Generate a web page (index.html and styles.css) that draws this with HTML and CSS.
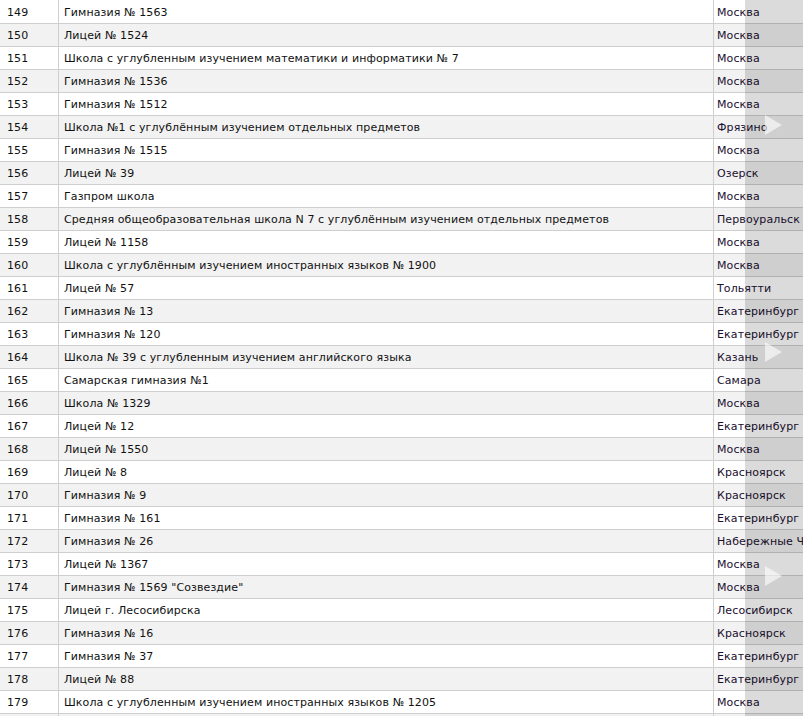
FILE: index.html
```html
<!DOCTYPE html>
<html lang="ru">
<head>
<meta charset="utf-8">
<link rel="stylesheet" href="styles.css">
</head>
<body>
<div class="wrap">
<table class="rating">
<colgroup><col class="c-num"><col class="c-name"><col class="c-city"></colgroup>
<tbody>
<tr><td>149</td><td>Гимназия № 1563</td><td>Москва</td></tr>
<tr><td>150</td><td>Лицей № 1524</td><td>Москва</td></tr>
<tr><td>151</td><td>Школа с углубленным изучением математики и информатики № 7</td><td>Москва</td></tr>
<tr><td>152</td><td>Гимназия № 1536</td><td>Москва</td></tr>
<tr><td>153</td><td>Гимназия № 1512</td><td>Москва</td></tr>
<tr><td>154</td><td>Школа №1 с углублённым изучением отдельных предметов</td><td>Фрязино</td></tr>
<tr><td>155</td><td>Гимназия № 1515</td><td>Москва</td></tr>
<tr><td>156</td><td>Лицей № 39</td><td>Озерск</td></tr>
<tr><td>157</td><td>Газпром школа</td><td>Москва</td></tr>
<tr><td>158</td><td>Средняя общеобразовательная школа N 7 с углублённым изучением отдельных предметов</td><td>Первоуральск</td></tr>
<tr><td>159</td><td>Лицей № 1158</td><td>Москва</td></tr>
<tr><td>160</td><td>Школа с углублённым изучением иностранных языков № 1900</td><td>Москва</td></tr>
<tr><td>161</td><td>Лицей № 57</td><td>Тольятти</td></tr>
<tr><td>162</td><td>Гимназия № 13</td><td>Екатеринбург</td></tr>
<tr><td>163</td><td>Гимназия № 120</td><td>Екатеринбург</td></tr>
<tr><td>164</td><td>Школа № 39 с углубленным изучением английского языка</td><td>Казань</td></tr>
<tr><td>165</td><td>Самарская гимназия №1</td><td>Самара</td></tr>
<tr><td>166</td><td>Школа № 1329</td><td>Москва</td></tr>
<tr><td>167</td><td>Лицей № 12</td><td>Екатеринбург</td></tr>
<tr><td>168</td><td>Лицей № 1550</td><td>Москва</td></tr>
<tr><td>169</td><td>Лицей № 8</td><td>Красноярск</td></tr>
<tr><td>170</td><td>Гимназия № 9</td><td>Красноярск</td></tr>
<tr><td>171</td><td>Гимназия № 161</td><td>Екатеринбург</td></tr>
<tr><td>172</td><td>Гимназия № 26</td><td>Набережные Челны</td></tr>
<tr><td>173</td><td>Лицей № 1367</td><td>Москва</td></tr>
<tr><td>174</td><td>Гимназия № 1569 "Созвездие"</td><td>Москва</td></tr>
<tr><td>175</td><td>Лицей г. Лесосибирска</td><td>Лесосибирск</td></tr>
<tr><td>176</td><td>Гимназия № 16</td><td>Красноярск</td></tr>
<tr><td>177</td><td>Гимназия № 37</td><td>Екатеринбург</td></tr>
<tr><td>178</td><td>Лицей № 88</td><td>Екатеринбург</td></tr>
<tr><td>179</td><td>Школа с углубленным изучением иностранных языков № 1205</td><td>Москва</td></tr>
<tr><td>180</td><td>Лицей № 2</td><td>Москва</td></tr>
</tbody>
</table>
<div class="shade">
  <span class="arrow a1"></span>
  <span class="arrow a2"></span>
  <span class="arrow a3"></span>
</div>
</div>
</body>
</html>
```
FILE: styles.css
```css
html, body {
  margin: 0;
  padding: 0;
  overflow: hidden;
  background: #fff;
}
.wrap {
  position: relative;
  width: 803px;
  height: 716px;
  overflow: hidden;
}
.rating {
  border-collapse: collapse;
  table-layout: fixed;
  width: 880px;
  margin-top: 0;
  margin-left: -1px;
  font-family: "DejaVu Sans", Verdana, sans-serif;
  font-size: 11px;
  letter-spacing: 0.1px;
  color: #111;
}
.c-num { width: 59px; }
.c-name { width: 655px; }
.c-city { width: 166px; }
.rating td {
  height: 20px;
  padding: 2px 0 0 7px;
  border: 1px solid #cfcfcf;
  white-space: nowrap;
  overflow: hidden;
  vertical-align: middle;
  line-height: 14px;
}
.rating tr:first-child td { border-top-color: #fff; }
.rating td:nth-child(2) { padding-left: 5px; }
.rating td:nth-child(3) { padding-left: 3px; color: #1a1030; }
.rating tr:nth-child(even) td { background: #f2f2f2; }
.shade {
  position: absolute;
  top: 0;
  right: 0;
  width: 58px;
  height: 716px;
  background: rgba(0, 0, 0, 0.14);
}
.arrow {
  position: absolute;
  left: 20px;
  width: 0;
  height: 0;
  border-top: 10px solid transparent;
  border-bottom: 10px solid transparent;
  border-left: 17px solid rgba(255, 255, 255, 0.6);
}
.a1 { top: 115px; }
.a2 { top: 342px; }
.a3 { top: 566px; }
```
